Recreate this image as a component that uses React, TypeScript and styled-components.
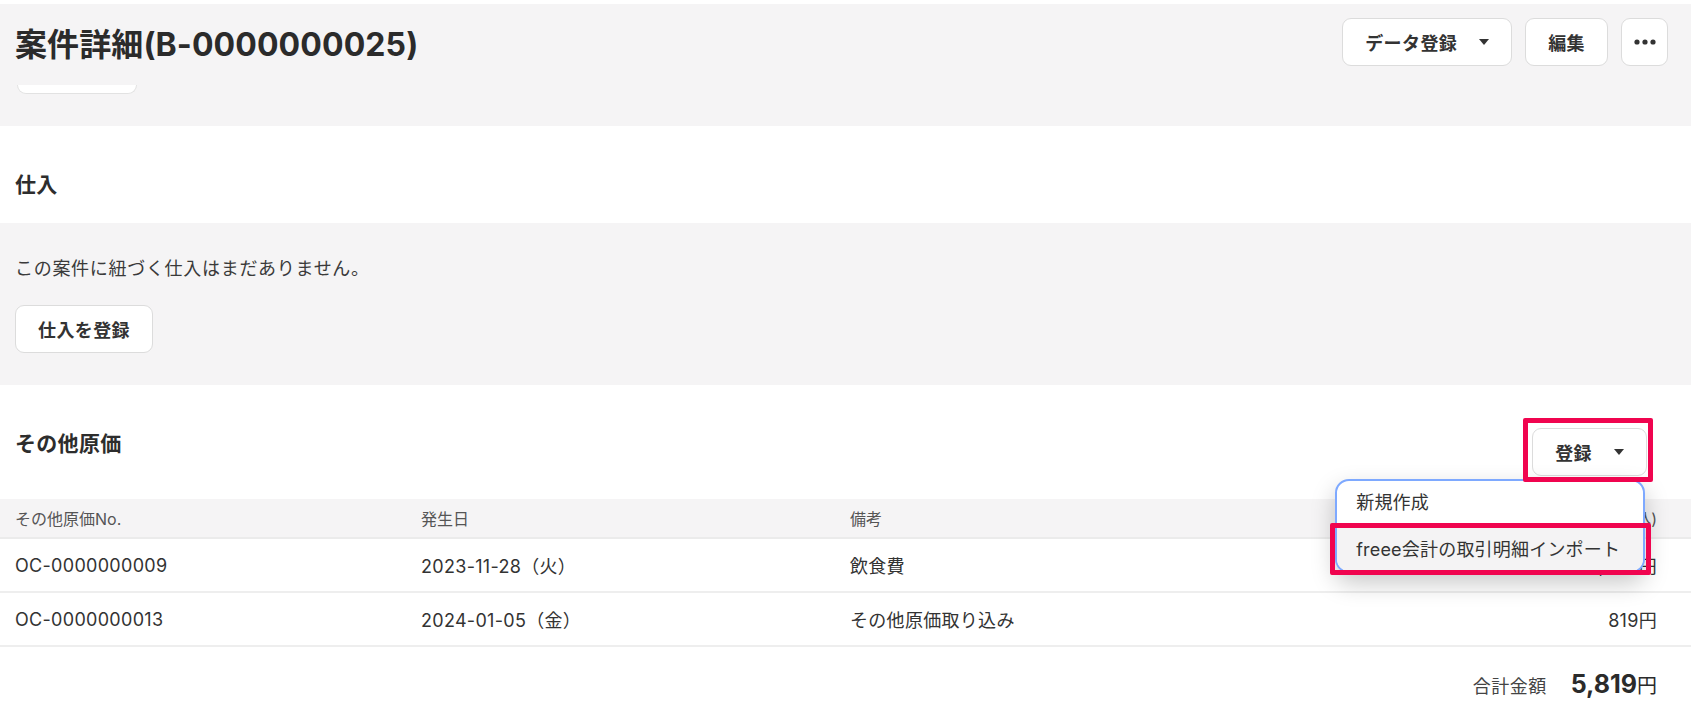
import styled, { createGlobalStyle } from "styled-components";

const GlobalStyle = createGlobalStyle`
  html, body {
    margin: 0;
    padding: 0;
    background: #ffffff;
    overflow: hidden;
  }
  body {
    font-family: "Inter", "Noto Sans CJK JP", sans-serif;
    color: #333333;
  }
`;

const rows = [
  { no: "OC-0000000009", date: "2023-11-28（火）", note: "飲食費", amount: "5,000円" },
  { no: "OC-0000000013", date: "2024-01-05（金）", note: "その他原価取り込み", amount: "819円" },
];

const Caret = () => (
  <svg width="10" height="6" viewBox="0 0 10 6">
    <path d="M0 0 L10 0 L5 6 Z" fill="#333" />
  </svg>
);

const Dots = () => (
  <svg width="22" height="6" viewBox="0 0 22 6">
    <circle cx="3" cy="3" r="2.6" fill="#333" />
    <circle cx="11" cy="3" r="2.6" fill="#333" />
    <circle cx="19" cy="3" r="2.6" fill="#333" />
  </svg>
);

const App = () => {
  return (
    <Page>
      <GlobalStyle />
      <Header>
        <TitleRow>
          <Title>案件詳細(B-0000000025)</Title>
          <Actions>
            <Button>
              データ登録
              <Caret />
            </Button>
            <Button>編集</Button>
            <IconButton>
              <Dots />
            </IconButton>
          </Actions>
        </TitleRow>
        <ClippedButton />
      </Header>

      <SectionHead>
        <SectionTitle>仕入</SectionTitle>
      </SectionHead>
      <EmptyPanel>
        <EmptyText>この案件に紐づく仕入はまだありません。</EmptyText>
        <div>
          <Button>仕入を登録</Button>
        </div>
      </EmptyPanel>

      <CostHead>
        <SectionTitle>その他原価</SectionTitle>
        <MenuAnchor>
          <Button>
            登録
            <Caret />
          </Button>
          <Menu>
            <MenuItem>新規作成</MenuItem>
            <MenuItem $active>freee会計の取引明細インポート</MenuItem>
          </Menu>
        </MenuAnchor>
      </CostHead>

      <TableHead>
        <span>その他原価No.</span>
        <span>発生日</span>
        <span>備考</span>
        <Amount>金額(税込)</Amount>
      </TableHead>
      {rows.map((r) => (
        <TableRow key={r.no}>
          <span>{r.no}</span>
          <span>{r.date}</span>
          <span>{r.note}</span>
          <Amount>{r.amount}</Amount>
        </TableRow>
      ))}
      <TotalRow>
        <TotalLabel>合計金額</TotalLabel>
        <TotalValue>
          5,819<Yen>円</Yen>
        </TotalValue>
      </TotalRow>
    </Page>
  );
};

export default App;

const Page = styled.div`
  padding-top: 4px;
  min-height: 702px;
  box-sizing: border-box;
`;

const Header = styled.header`
  background: #f5f4f5;
  padding: 14px 23px 32px 15px;
`;

const TitleRow = styled.div`
  display: flex;
  align-items: center;
  justify-content: space-between;
  height: 47px;
`;

const Title = styled.h1`
  margin: 0;
  font-size: 32px;
  font-weight: 700;
  color: #2b2b2b;
  letter-spacing: 0.1px;
`;

const Actions = styled.div`
  display: flex;
  gap: 13px;
`;

const Button = styled.button`
  display: inline-flex;
  align-items: center;
  gap: 22px;
  height: 48px;
  padding: 0 22px;
  background: #ffffff;
  border: 1px solid #dcdcdc;
  border-radius: 9px;
  font-family: inherit;
  font-size: 18px;
  font-weight: 700;
  letter-spacing: 0.4px;
  white-space: nowrap;
  color: #333333;
  box-sizing: border-box;
`;

const IconButton = styled(Button)`
  width: 47px;
  padding: 0;
  justify-content: center;
`;

const ClippedButton = styled.div`
  margin: 20px 0 0 2px;
  width: 118px;
  height: 8px;
  background: #ffffff;
  border: 1px solid #e2e2e2;
  border-top: none;
  border-radius: 0 0 9px 9px;
`;

const SectionHead = styled.div`
  height: 97px;
  display: flex;
  align-items: flex-end;
  padding: 0 15px 24px;
  box-sizing: border-box;
`;

const SectionTitle = styled.h2`
  margin: 0;
  font-size: 21px;
  line-height: 29px;
  font-weight: 700;
  letter-spacing: 0.3px;
  color: #2d2d2d;
`;

const EmptyPanel = styled.div`
  background: #f5f4f5;
  padding: 32px 15px 32px;
  display: flex;
  flex-direction: column;
  gap: 23px;
`;

const EmptyText = styled.p`
  margin: 0;
  font-size: 18px;
  line-height: 27px;
  letter-spacing: 0.7px;
  color: #3a3a3a;
`;

const CostHead = styled.div`
  display: flex;
  align-items: flex-start;
  justify-content: space-between;
  padding: 43px 44px 0 15px;
  margin-bottom: 23px;

  ${SectionTitle} {
    margin-top: 1px;
  }
`;

const MenuAnchor = styled.div`
  position: relative;

  &::after {
    content: "";
    position: absolute;
    top: -10px;
    left: -9px;
    right: -6px;
    bottom: -6px;
    border: 5px solid #f0044f;
    border-radius: 2px;
    pointer-events: none;
    z-index: 3;
  }
`;

const Menu = styled.div`
  position: absolute;
  top: 51px;
  left: -197px;
  width: 310px;
  box-sizing: border-box;
  background: #ffffff;
  border: 2px solid #7ea9ff;
  border-radius: 14px;
  box-shadow: 0 10px 24px rgba(0, 0, 0, 0.22);
  z-index: 2;
`;

const MenuItem = styled.div<{ $active?: boolean }>`
  position: relative;
  display: flex;
  align-items: center;
  box-sizing: border-box;
  height: ${(p) => (p.$active ? "46px" : "44px")};
  padding: ${(p) => (p.$active ? "0 19px" : "0 19px 4px")};
  font-size: 18px;
  letter-spacing: 0.2px;
  white-space: nowrap;
  color: #333333;
  background: ${(p) => (p.$active ? "#f4f3f4" : "transparent")};
  border-radius: ${(p) => (p.$active ? "0 0 12px 12px" : "12px 12px 0 0")};

  ${(p) =>
    p.$active &&
    `
    &::after {
      content: "";
      position: absolute;
      top: -2px;
      left: -7px;
      right: -8px;
      bottom: -4px;
      border: 5px solid #f0044f;
      border-radius: 2px;
      pointer-events: none;
    }
  `}
`;

const TableHead = styled.div`
  display: grid;
  grid-template-columns: 406px 429px 1fr auto;
  align-items: center;
  height: 40px;
  box-sizing: border-box;
  padding: 0 34px 0 15px;
  background: #f5f4f5;
  border-bottom: 2px solid #ebebeb;
  font-size: 16px;
  color: #555555;
`;

const TableRow = styled.div`
  display: grid;
  grid-template-columns: 406px 429px 1fr auto;
  align-items: center;
  height: 54px;
  box-sizing: border-box;
  padding: 0 34px 0 15px;
  border-bottom: 2px solid #eeeeee;
  font-size: 18px;
  letter-spacing: 0.3px;
  color: #333333;
`;

const Amount = styled.span`
  text-align: right;
`;

const TotalRow = styled.div`
  display: flex;
  justify-content: flex-end;
  align-items: baseline;
  gap: 24px;
  padding: 22px 34px 0 0;
`;

const TotalLabel = styled.span`
  font-size: 18px;
  letter-spacing: 0.5px;
  color: #444444;
`;

const TotalValue = styled.span`
  font-size: 25px;
  font-weight: 700;
  color: #2b2b2b;
`;

const Yen = styled.span`
  font-size: 20px;
  font-weight: 400;
`;
